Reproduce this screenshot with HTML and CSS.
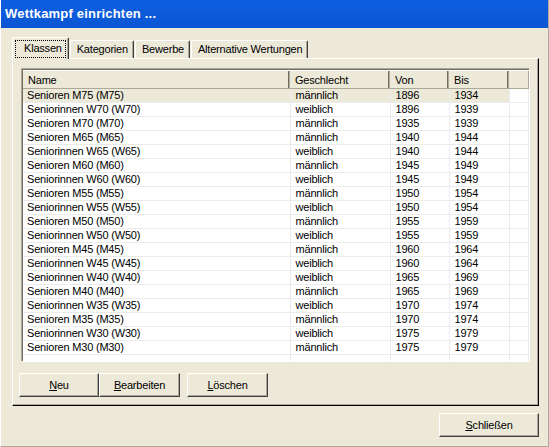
FILE: index.html
```html
<!DOCTYPE html>
<html lang="de">
  <head>
    <meta charset="UTF-8" />
    <title>Wettkampf einrichten</title>
    <link rel="stylesheet" href="styles.css">
  </head>
  <body>
    <div class="window">
      <div class="titlebar">Wettkampf einrichten ...</div>

      <div class="client">
        <div class="tabs">
          <div class="tab tab-active"><span class="focus">Klassen</span></div>
          <div class="tab">Kategorien</div>
          <div class="tab">Bewerbe</div>
          <div class="tab">Alternative Wertungen</div>
        </div>

        <div class="panel">
          <div class="list">
            <table class="grid">
              <thead>
                <tr>
                  <th class="c-name">Name</th>
                  <th class="c-sex">Geschlecht</th>
                  <th class="c-from">Von</th>
                  <th class="c-to">Bis</th>
                  <th class="c-rest"></th>
                </tr>
              </thead>
              <tbody>
                <tr class="selected"><td>Senioren M75 (M75)</td><td>männlich</td><td>1896</td><td>1934</td><td></td></tr>
                <tr><td>Seniorinnen W70 (W70)</td><td>weiblich</td><td>1896</td><td>1939</td><td></td></tr>
                <tr><td>Senioren M70 (M70)</td><td>männlich</td><td>1935</td><td>1939</td><td></td></tr>
                <tr><td>Senioren M65 (M65)</td><td>männlich</td><td>1940</td><td>1944</td><td></td></tr>
                <tr><td>Seniorinnen W65 (W65)</td><td>weiblich</td><td>1940</td><td>1944</td><td></td></tr>
                <tr><td>Senioren M60 (M60)</td><td>männlich</td><td>1945</td><td>1949</td><td></td></tr>
                <tr><td>Seniorinnen W60 (W60)</td><td>weiblich</td><td>1945</td><td>1949</td><td></td></tr>
                <tr><td>Senioren M55 (M55)</td><td>männlich</td><td>1950</td><td>1954</td><td></td></tr>
                <tr><td>Seniorinnen W55 (W55)</td><td>weiblich</td><td>1950</td><td>1954</td><td></td></tr>
                <tr><td>Senioren M50 (M50)</td><td>männlich</td><td>1955</td><td>1959</td><td></td></tr>
                <tr><td>Seniorinnen W50 (W50)</td><td>weiblich</td><td>1955</td><td>1959</td><td></td></tr>
                <tr><td>Senioren M45 (M45)</td><td>männlich</td><td>1960</td><td>1964</td><td></td></tr>
                <tr><td>Seniorinnen W45 (W45)</td><td>weiblich</td><td>1960</td><td>1964</td><td></td></tr>
                <tr><td>Seniorinnen W40 (W40)</td><td>weiblich</td><td>1965</td><td>1969</td><td></td></tr>
                <tr><td>Senioren M40 (M40)</td><td>männlich</td><td>1965</td><td>1969</td><td></td></tr>
                <tr><td>Seniorinnen W35 (W35)</td><td>weiblich</td><td>1970</td><td>1974</td><td></td></tr>
                <tr><td>Senioren M35 (M35)</td><td>männlich</td><td>1970</td><td>1974</td><td></td></tr>
                <tr><td>Seniorinnen W30 (W30)</td><td>weiblich</td><td>1975</td><td>1979</td><td></td></tr>
                <tr><td>Senioren M30 (M30)</td><td>männlich</td><td>1975</td><td>1979</td><td></td></tr>
                <tr class="filler"><td></td><td></td><td></td><td></td><td></td></tr>
              </tbody>
            </table>
          </div>

          <div class="btn-row">
            <button class="btn btn-neu" type="button"><u>N</u>eu</button>
            <button class="btn btn-edit" type="button"><u>B</u>earbeiten</button>
            <button class="btn btn-del" type="button"><u>L</u>öschen</button>
          </div>
        </div>

        <div class="footer">
          <button class="btn btn-close" type="button"><u>S</u>chließen</button>
        </div>
      </div>
    </div>
  </body>
</html>
```

FILE: styles.css
```css
html,
body {
  margin: 0;
  padding: 0;
}
body {
  background: #ece9d8;
  font-family: "Liberation Sans", Arial, sans-serif;
  font-size: 11px;
  letter-spacing: -0.2px;
  color: #000;
}

.window {
  box-sizing: border-box;
  width: 549px;
  height: 447px;
  background: #ece9d8;
  border-left: 1px solid #fff;
  border-right: 1px solid #aca899;
  border-bottom: 1px solid #aca899;
}

.titlebar {
  height: 28px;
  line-height: 28px;
  padding-left: 4px;
  background: linear-gradient(#0e5fe0, #0a56d4);
  color: #fff;
  font-weight: bold;
  font-size: 13px;
  letter-spacing: 0.2px;
}

.client {
  padding: 9px 0 0 11px;
}

/* tabs */
.tabs {
  display: flex;
  align-items: flex-end;
  height: 21px;
  position: relative;
  z-index: 1;
}
.tab {
  box-sizing: border-box;
  height: 18px;
  line-height: 16px;
  padding: 0 5px 0 6px;
  margin-left: 1px;
  border-top: 1px solid #fff;
  border-left: 1px solid #fff;
  border-right: 1px solid #404040;
  box-shadow: inset -1px 0 #aca899;
  border-radius: 2px 2px 0 0;
}
.tab-active {
  height: 22px;
  margin-left: 0;
  margin-bottom: -1px;
  padding: 2px 2px 0 2px;
  background: #ece9d8;
}
.tab-active .focus {
  display: block;
  padding: 0 3px 0 8px;
  height: 16px;
  line-height: 15px;
  border: 1px dotted #000;
}

.panel {
  box-sizing: border-box;
  width: 527px;
  height: 348px;
  padding: 9px 0 0 8px;
  border-top: 1px solid #fff;
  border-left: 1px solid #fff;
  border-right: 1px solid #000;
  border-bottom: 1px solid #000;
  box-shadow: inset -1px -1px #aca899;
}

/* list view */
.list {
  box-sizing: border-box;
  width: 509px;
  height: 294px;
  background: #fff;
  border-top: 1px solid #aca899;
  border-left: 1px solid #aca899;
  border-right: 1px solid #fff;
  border-bottom: 1px solid #fff;
  box-shadow: inset 1px 1px #716f64;
  padding: 1px 0 0 1px;
  overflow: hidden;
}
.grid {
  border-collapse: collapse;
  table-layout: fixed;
  width: 506px;
}
.grid th {
  box-sizing: border-box;
  height: 18px;
  padding: 0 0 0 5px;
  text-align: left;
  font-weight: normal;
  background: #ece9d8;
  border-top: 1px solid #fff;
  border-bottom: 1px solid #aca899;
  box-shadow: inset -1px 0 #aca899, inset -2px 0 #716f64;
}
.grid th.c-rest {
  box-shadow: inset -1px 0 #aca899;
}
.c-name {
  width: 267px;
}
.c-sex {
  width: 100px;
}
.c-from {
  width: 59px;
}
.c-to {
  width: 60px;
}
.grid td {
  height: 13px;
  line-height: 13px;
  padding: 0 0 0 5px;
  white-space: nowrap;
  overflow: hidden;
  border-right: 1px solid #ebebeb;
  border-bottom: 1px solid #ebebeb;
}
.grid td:first-child {
  padding-left: 4px;
}
.grid tr.selected td {
  background: #ece9d8;
}
.grid tr.selected td:last-child {
  background: #fff;
}
.grid tr.filler td {
  height: 8px;
  border-bottom: 0;
}

/* buttons */
.btn {
  box-sizing: border-box;
  height: 24px;
  padding: 0;
  font-family: "Liberation Sans", Arial, sans-serif;
  font-size: 11px;
  letter-spacing: -0.2px;
  color: #000;
  background: #ece9d8;
  border-top: 1px solid #fff;
  border-left: 1px solid #fff;
  border-right: 1px solid #404040;
  border-bottom: 1px solid #404040;
  box-shadow: inset -1px -1px #aca899;
  border-radius: 0;
}
.btn-row {
  display: flex;
  margin: 11px 0 0 -2px;
}
.btn-neu {
  width: 80px;
}
.btn-edit {
  width: 81px;
}
.btn-del {
  width: 81px;
  margin-left: 7px;
}

.footer {
  display: flex;
  justify-content: flex-end;
  width: 527px;
  margin-top: 7px;
}
.btn-close {
  width: 100px;
}
```
